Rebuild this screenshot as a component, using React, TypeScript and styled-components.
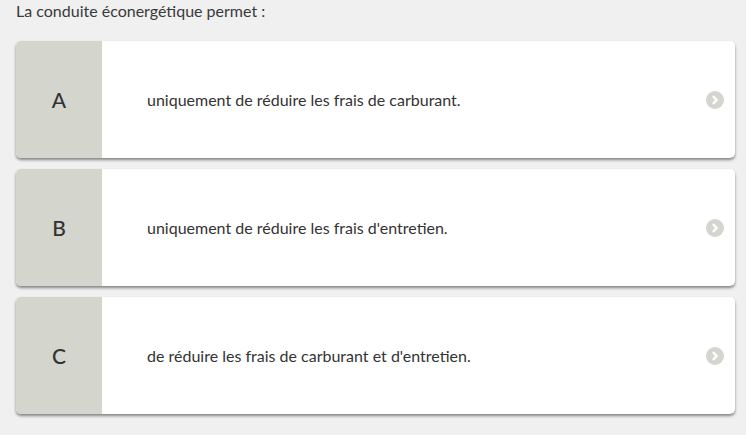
import styled, { createGlobalStyle } from "styled-components";

const GlobalStyle = createGlobalStyle`
  body {
    margin: 0;
    background: #f0f0f0;
    font-family: Lato, "Liberation Sans", sans-serif;
    color: #333;
  }
`;

const Page = styled.div`
  width: 746px;
  height: 425px;
  padding: 0 11px 0 16px;
  box-sizing: border-box;
  background: #f0f0f0;
`;

const Question = styled.div`
  font-size: 16px;
  line-height: 22px;
  height: 41px;
  color: #3a3a3a;
`;

const Answers = styled.div`
  display: flex;
  flex-direction: column;
  gap: 11px;
`;

const Card = styled.div`
  display: flex;
  height: 117px;
  background: #fff;
  border-radius: 5px;
  overflow: hidden;
  box-shadow: 0 2px 3px rgba(0, 0, 0, 0.45);
`;

const Letter = styled.div`
  width: 86px;
  flex-shrink: 0;
  background: #d4d5cc;
  display: flex;
  align-items: center;
  justify-content: center;
  font-size: 21px;
  font-weight: 500;
  color: #333;
`;

const Text = styled.div`
  flex: 1;
  display: flex;
  align-items: center;
  padding-left: 45px;
  font-size: 16px;
  color: #333;
`;

const Arrow = styled.div`
  width: 18px;
  height: 18px;
  margin-right: 11px;
  align-self: center;
  border-radius: 50%;
  background: #d4d5cc;
  display: flex;
  align-items: center;
  justify-content: center;
`;

const answers = [
  { letter: "A", text: "uniquement de réduire les frais de carburant." },
  { letter: "B", text: "uniquement de réduire les frais d'entretien." },
  { letter: "C", text: "de réduire les frais de carburant et d'entretien." },
];

export default function App() {
  return (
    <Page>
      <GlobalStyle />
      <Question>La conduite éconergétique permet&nbsp;:</Question>
      <Answers>
        {answers.map((a) => (
          <Card key={a.letter}>
            <Letter>{a.letter}</Letter>
            <Text>{a.text}</Text>
            <Arrow>
              <svg width="10" height="10" viewBox="0 0 10 10">
                <path d="M3.6 1.8 L6.8 5 L3.6 8.2" fill="none" stroke="#fff" strokeWidth="2.4" strokeLinecap="round" strokeLinejoin="round" />
              </svg>
            </Arrow>
          </Card>
        ))}
      </Answers>
    </Page>
  );
}
